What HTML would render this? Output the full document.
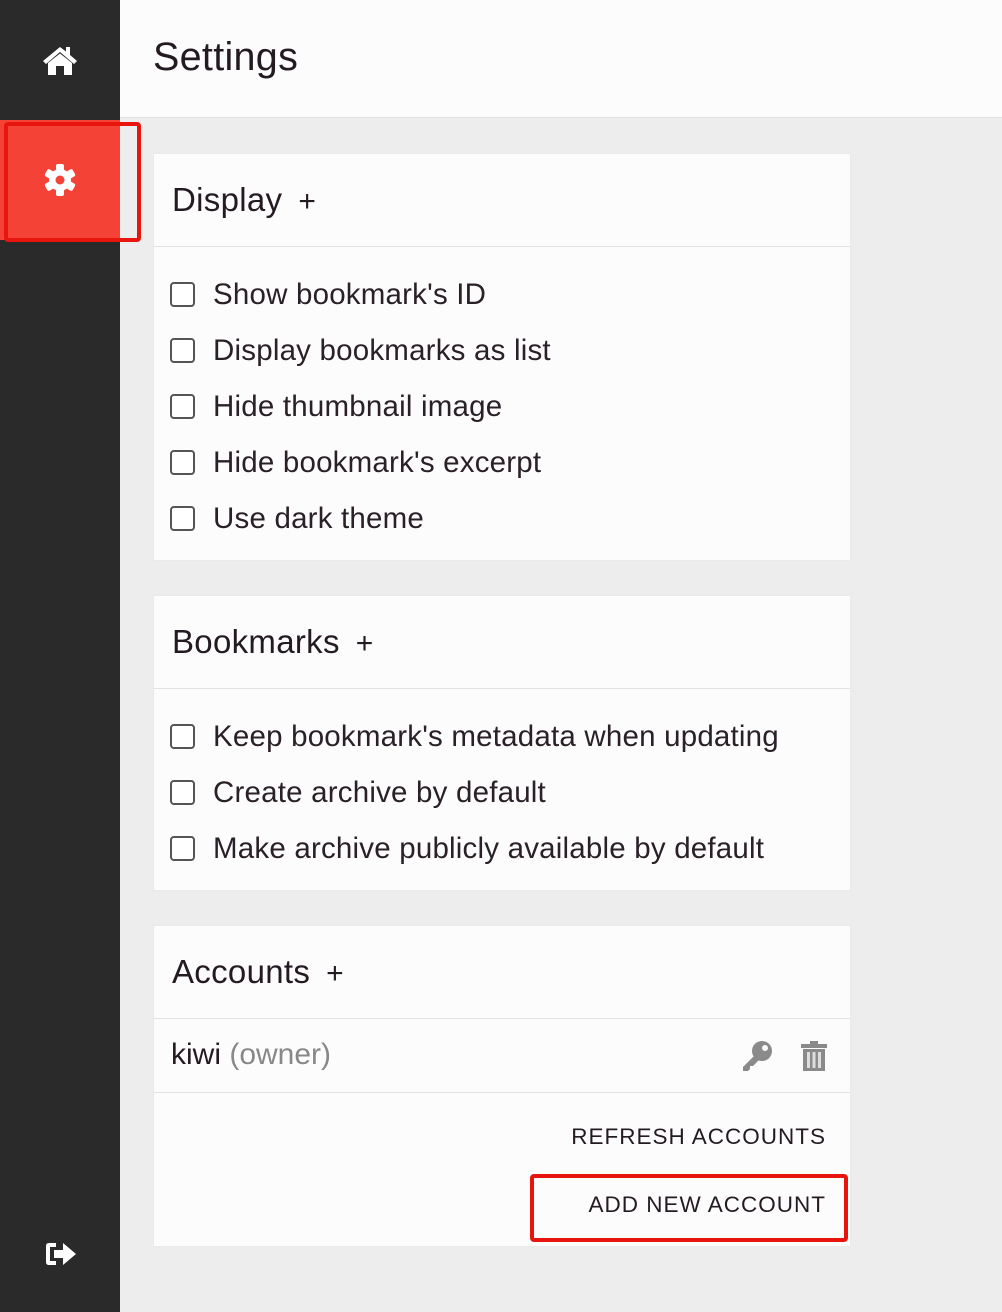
<!DOCTYPE html>
<html><head><meta charset="utf-8"><style>
*{margin:0;padding:0;box-sizing:border-box}
body{width:1002px;height:1312px;background:#eeedee;font-family:"Liberation Sans",sans-serif;color:#231a22;position:relative;overflow:hidden}
.side{position:absolute;left:0;top:0;width:120px;height:1312px;background:#2a2a2a}
.active{position:absolute;left:0;top:120px;width:120px;height:120px;background:#f44336}
.hl{position:absolute;border:4px solid #e8150f;border-radius:4px}
.header{position:absolute;left:120px;top:0;right:0;height:118px;background:#fdfcfd;border-bottom:1px solid #e2e2e2}
.header h1{position:absolute;left:33px;top:35px;font-size:39.5px;font-weight:normal;letter-spacing:0.3px}
.card{position:absolute;left:154px;width:696px;background:#fdfcfd;box-shadow:0 0 1px #ddd}
.ch{height:93px;border-bottom:1px solid #e2e2e2;font-size:33px;padding:27px 0 0 18px;letter-spacing:0.3px}
.ch span{margin-left:16px;font-size:30px}
.row{position:absolute;left:16px;font-size:29.5px;letter-spacing:0.2px;color:#2a2028}
.cb{position:absolute;left:0;top:3px;width:25px;height:25px;border:2px solid #555;border-radius:4px;background:#fff}
.row .t{margin-left:43px;white-space:nowrap;line-height:32px}
.btn{position:absolute;right:24px;font-size:22.5px;letter-spacing:1px;color:#231a22}
</style></head><body>
<div class="side">
 <div class="active"></div>
 <svg style="position:absolute;left:41px;top:44px" width="38" height="32" viewBox="0 0 38 32"><path d="M19 3 L2 17 L5 20 L19 8 L33 20 L36 17 L29 11 V3 H25 V7.5 Z" fill="#fff"/><path d="M7 19 L19 9.5 L31 19 V31 H23 V22 H15 V31 H7 Z" fill="#fff"/></svg>
 <svg style="position:absolute;left:43px;top:163px" width="34" height="34" viewBox="-17 -17 34 34"><g fill="#fff"><circle r="11"/><rect x="-4" y="-16" width="8" height="32" rx="2"/><rect x="-4" y="-16" width="8" height="32" rx="2" transform="rotate(60)"/><rect x="-4" y="-16" width="8" height="32" rx="2" transform="rotate(120)"/></g><circle r="4.5" fill="#f44336"/></svg>
 <svg style="position:absolute;left:44px;top:1240px" width="34" height="28" viewBox="0 0 34 28"><path d="M12 3 H5 Q2 3 2 6 V22 Q2 25 5 25 H12 V21 H6 V7 H12 Z" fill="#fff"/><path d="M10 10 H19 V3 L32 14 L19 25 V18 H10 Z" fill="#fff"/></svg>
</div>
<div class="hl" style="left:4px;top:122px;width:137px;height:120px"></div>
<div class="header"><h1>Settings</h1></div>

<div class="card" style="top:154px;height:406px">
 <div class="ch">Display<span>+</span></div>
 <div class="row" style="top:125px"><div class="cb"></div><div class="t">Show bookmark's ID</div></div>
 <div class="row" style="top:181px"><div class="cb"></div><div class="t">Display bookmarks as list</div></div>
 <div class="row" style="top:237px"><div class="cb"></div><div class="t">Hide thumbnail image</div></div>
 <div class="row" style="top:293px"><div class="cb"></div><div class="t">Hide bookmark's excerpt</div></div>
 <div class="row" style="top:349px"><div class="cb"></div><div class="t">Use dark theme</div></div>
</div>

<div class="card" style="top:596px;height:294px">
 <div class="ch">Bookmarks<span>+</span></div>
 <div class="row" style="top:125px"><div class="cb"></div><div class="t">Keep bookmark's metadata when updating</div></div>
 <div class="row" style="top:181px"><div class="cb"></div><div class="t">Create archive by default</div></div>
 <div class="row" style="top:237px"><div class="cb"></div><div class="t">Make archive publicly available by default</div></div>
</div>

<div class="card" style="top:926px;height:320px">
 <div class="ch">Accounts<span>+</span></div>
 <div style="height:74px;border-bottom:1px solid #e2e2e2;position:relative">
  <div style="position:absolute;left:17px;top:19px;font-size:30px">kiwi <span style="color:#888">(owner)</span></div>
  <svg style="position:absolute;left:586px;top:20px" width="36" height="34" viewBox="0 0 36 34"><circle cx="22" cy="12" r="10" fill="#8a8a8a"/><circle cx="25" cy="9" r="3" fill="#fdfcfd"/><path d="M15 16 L3 28 L3 32 L8 32 L10 30 L10 27 L13 27 L19 21 Z" fill="#8a8a8a"/></svg>
  <svg style="position:absolute;left:645px;top:20px" width="30" height="34" viewBox="0 0 30 34"><rect x="2" y="5" width="26" height="4" fill="#8a8a8a"/><rect x="11" y="2" width="8" height="4" fill="#8a8a8a"/><rect x="4" y="10" width="22" height="22" fill="#8a8a8a"/><rect x="8" y="13" width="3" height="16" fill="#ddd"/><rect x="13.5" y="13" width="3" height="16" fill="#ddd"/><rect x="19" y="13" width="3" height="16" fill="#ddd"/></svg>
 </div>
 <div class="btn" style="top:198px">REFRESH ACCOUNTS</div>
 <div class="btn" style="top:266px">ADD NEW ACCOUNT</div>
</div>
<div class="hl" style="left:530px;top:1174px;width:318px;height:68px"></div>
</body></html>
